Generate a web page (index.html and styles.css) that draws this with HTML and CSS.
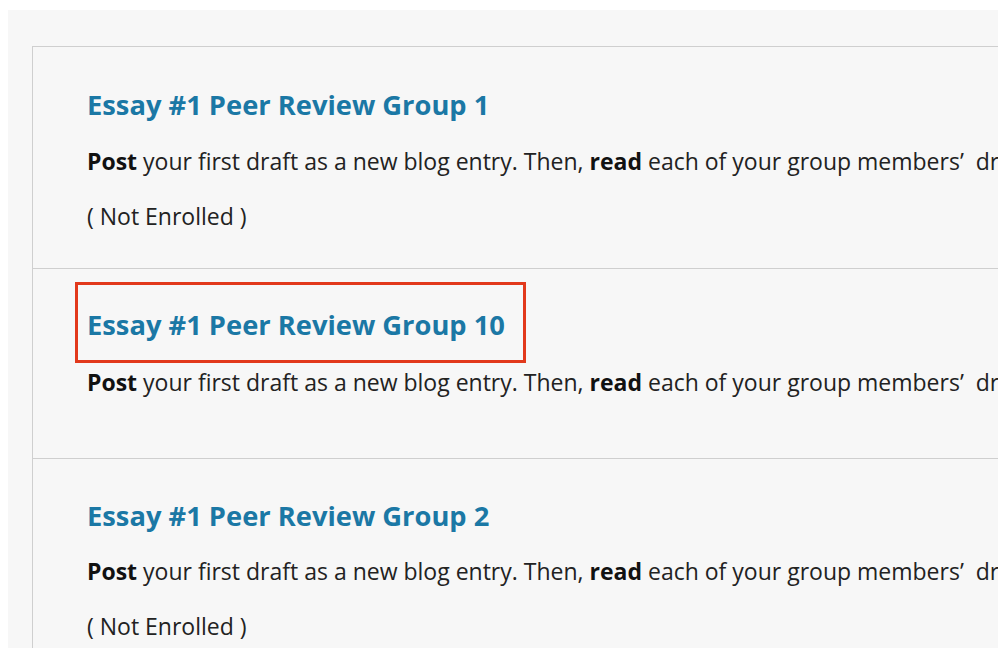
FILE: index.html
```html
<!DOCTYPE html>
<html lang="en">
<head>
<meta charset="utf-8">
<title>Groups</title>
<link rel="stylesheet" href="styles.css">
</head>
<body>
<div class="panel">
  <ul class="group-list">
    <li class="group">
      <h3 class="group-title"><a href="#">Essay #1 Peer Review Group 1</a></h3>
      <p class="group-desc"><strong>Post</strong> your first draft as a new blog entry. Then, <strong>read</strong> each of your group members’&nbsp; drafts and leave a comment.</p>
      <p class="group-status">( Not Enrolled )</p>
    </li>
    <li class="group group-open">
      <h3 class="group-title"><a href="#" class="marked">Essay #1 Peer Review Group 10</a></h3>
      <p class="group-desc"><strong>Post</strong> your first draft as a new blog entry. Then, <strong>read</strong> each of your group members’&nbsp; drafts and leave a comment.</p>
    </li>
    <li class="group group-last">
      <h3 class="group-title"><a href="#">Essay #1 Peer Review Group 2</a></h3>
      <p class="group-desc"><strong>Post</strong> your first draft as a new blog entry. Then, <strong>read</strong> each of your group members’&nbsp; drafts and leave a comment.</p>
      <p class="group-status">( Not Enrolled )</p>
    </li>
  </ul>
</div>
</body>
</html>
```

FILE: styles.css
```css
html, body {
  margin: 0;
  padding: 0;
  background: #ffffff;
  overflow: hidden;
}

body {
  padding: 10px 0 0 8px;
  font-family: "Open Sans", "Liberation Sans", sans-serif;
  color: #222;
}

.panel {
  background: #f7f7f7;
  padding: 36px 0 0 24px;
  height: 700px;
  overflow: hidden;
}

.group-list {
  list-style: none;
  margin: 0;
  padding: 0;
  border: 1px solid #cfcfcf;
  border-right: none;
  width: 1400px;
}

.group {
  padding: 40px 0 0 54px;
  border-bottom: 1px solid #cfcfcf;
  white-space: nowrap;
}

.group-title {
  margin: 0;
  font-size: 27.3px;
  font-weight: 700;
  line-height: 36px;
}

.group-title a {
  color: #1b78a5;
  text-decoration: none;
  position: relative;
}

/* red frame drawn around the highlighted group link */
.group-title a.marked::after {
  content: "";
  position: absolute;
  left: -12px;
  right: -21px;
  top: -24px;
  bottom: -20px;
  border: 3px solid #e2391c;
}

.group-desc {
  margin: 20px 0 0;
  font-size: 23px;
  line-height: 36px;
  color: #222;
}

.group-desc strong {
  color: #111;
}

.group-status {
  margin: 19px 0 0;
  font-size: 23px;
  line-height: 36px;
  padding-bottom: 34px;
}

.group-open {
  padding-top: 38px;
  padding-bottom: 58px;
}

.group-open .group-desc {
  margin-top: 21px;
}

.group-last {
  padding-top: 39px;
}

.group-last .group-desc {
  margin-top: 19px;
}
```
